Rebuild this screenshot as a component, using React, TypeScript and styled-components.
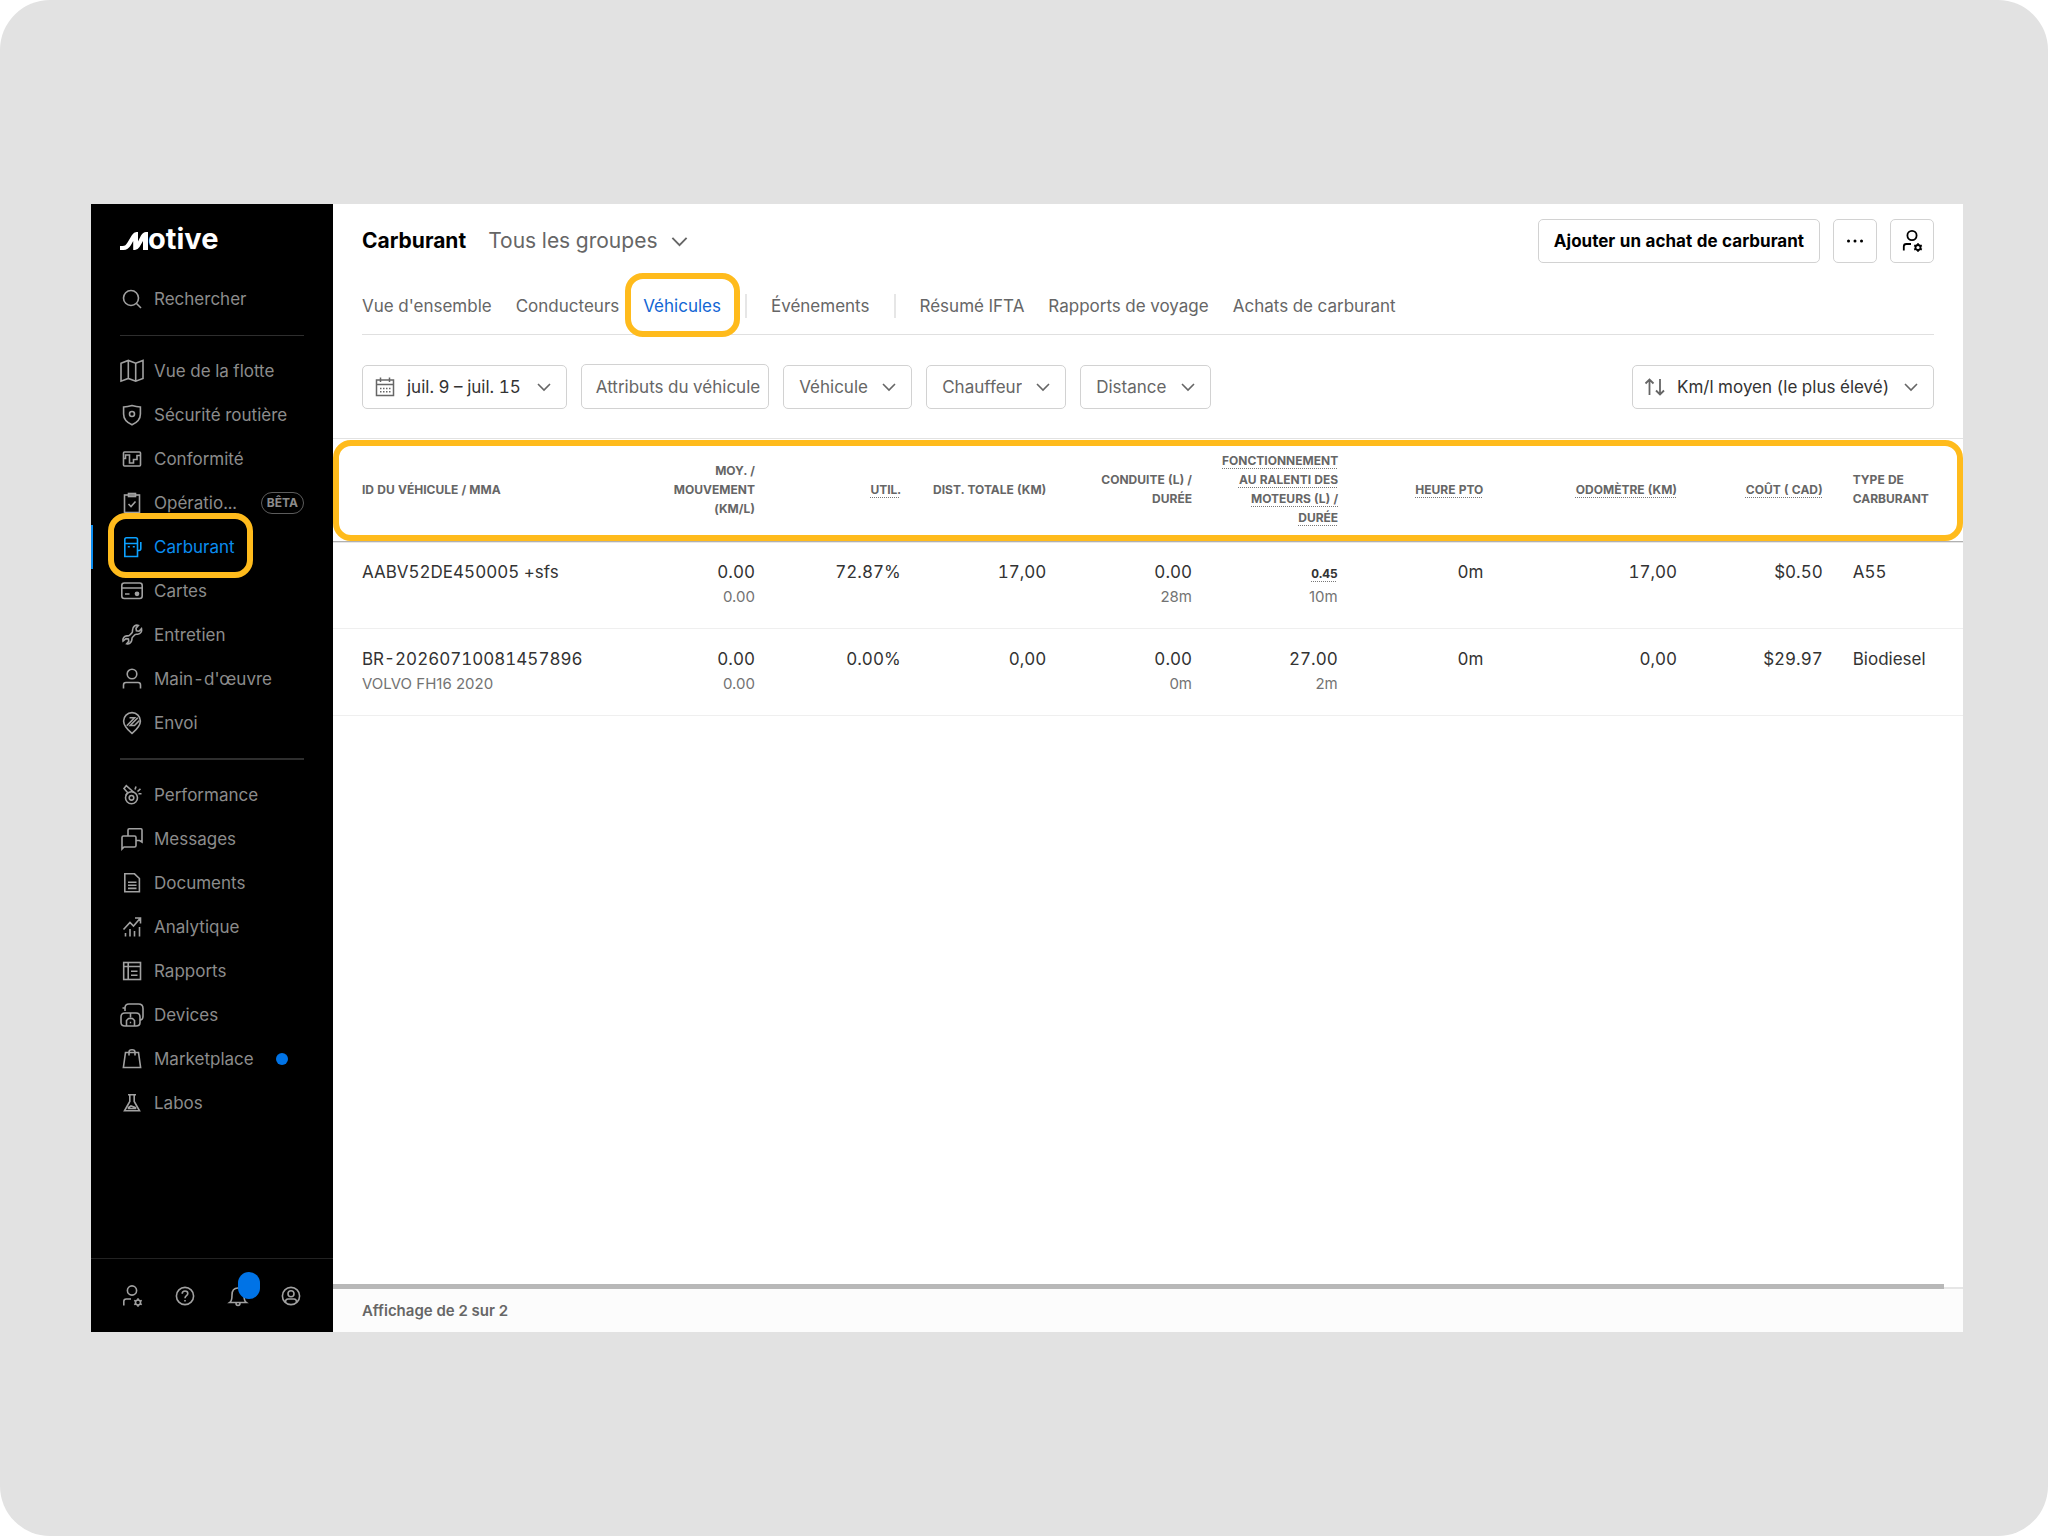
import React from "react";
import styled, { createGlobalStyle, css } from "styled-components";

const FONT = 'Inter, "Liberation Sans", sans-serif';
const GREY = "#666666";
const INK = "#333333";
const HIGHLIGHT = "#ffbb1c";

const GlobalStyle = createGlobalStyle`
  *, *::before, *::after { box-sizing: border-box; }
  html { background: #ffffff; }
  body {
    margin: 0;
    font-family: ${FONT};
    font-size: 17px;
    line-height: 24px;
    font-variant-numeric: tabular-nums;
    color: ${INK};
  }
  button, select { font: inherit; font-variant-numeric: inherit; color: inherit; cursor: pointer; }
  a { color: inherit; text-decoration: none; }
`;

const Backdrop = styled.div`
  min-height: 100vh;
  display: flex;
  padding: 204px 85px 204px 91px;
  background: #e2e2e2;
  border-radius: 50px;
`;

const Window = styled.div`
  flex: 1;
  min-width: 0;
  display: flex;
  background: #ffffff;
`;

const callout = css`
  content: "";
  position: absolute;
  border: 6px solid ${HIGHLIGHT};
  border-radius: 18px;
  pointer-events: none;
`;

/* ---------- Sidebar ---------- */

const Sidebar = styled.aside`
  flex: 0 0 242px;
  display: flex;
  flex-direction: column;
  background: #000000;
  color: #8c8c8c;
`;

const Brand = styled.a`
  display: flex;
  align-items: flex-start;
  height: 34px;
  margin: 17px 29px 22px;
  color: #ffffff;
`;

const BrandText = styled.span`
  font-size: 29px;
  line-height: 36px;
  font-weight: 700;
`;

const NavList = styled.ul`
  list-style: none;
  margin: 0;
  padding: 0;
`;

const NavLink = styled.a<{ $active?: boolean }>`
  position: relative;
  display: flex;
  align-items: center;
  gap: 10px;
  height: 44px;
  padding: 0 29px;
  white-space: nowrap;
  ${(p) =>
    p.$active &&
    css`
      color: #0a8cf0;
      box-shadow: inset 2px 0 0 #0a8cf0;
      &::after {
        ${callout}
        left: 17px;
        top: -12px;
        width: 145px;
        height: 65px;
      }
    `}
`;

const NavIcon = styled.svg`
  flex: none;
  width: 24px;
  height: 24px;
  fill: none;
  stroke: currentColor;
  stroke-width: 1.6;
  filter: brightness(1.15);
`;

const Rule = styled.hr<{ $thick?: boolean }>`
  width: 184px;
  height: ${(p) => (p.$thick ? 2 : 1)}px;
  margin: ${(p) => (p.$thick ? 13 : 14)}px 29px 13px;
  border: 0;
  background: #2e2e2e;
`;

const Beta = styled.span`
  margin-left: auto;
  height: 22px;
  padding: 0 5px;
  border: 1px solid #5c5c5c;
  border-radius: 11px;
  font-size: 12px;
  line-height: 20px;
  font-weight: 700;
`;

const Dot = styled.span`
  width: 12px;
  height: 12px;
  margin-left: 12px;
  border-radius: 50%;
  background: #0073e6;
`;

const SideFooter = styled.div`
  display: flex;
  gap: 29px;
  margin-top: auto;
  padding: 25px 29px 24px;
  border-top: 1px solid #222222;
`;

const SideButton = styled.button`
  position: relative;
  display: flex;
  padding: 0;
  border: 0;
  background: none;
`;

const Notice = styled.span`
  position: absolute;
  left: 12px;
  top: -12px;
  width: 22px;
  height: 27px;
  border-radius: 11px;
  background: #0073e6;
`;

/* ---------- Main column ---------- */

const Main = styled.main`
  flex: 1;
  min-width: 0;
  display: flex;
  flex-direction: column;
`;

const TopBar = styled.header`
  padding: 15px 29px 0;
`;

const TitleRow = styled.div`
  display: flex;
  align-items: center;
  height: 44px;
`;

const Title = styled.h1`
  margin: 0 22px 0 0;
  font-size: 21px;
  line-height: 32px;
  font-weight: 700;
  color: #000000;
`;

const Actions = styled.div`
  display: flex;
  gap: 13px;
  margin-left: auto;
`;

const Button = styled.button<{ $strong?: boolean; $square?: boolean }>`
  display: flex;
  align-items: center;
  justify-content: center;
  height: 44px;
  width: ${(p) => (p.$square ? "44px" : "auto")};
  padding: 0 ${(p) => (p.$square ? 0 : 15)}px;
  border: 1px solid #d2d2d2;
  border-radius: 5px;
  background: #ffffff;
  white-space: nowrap;
  color: ${(p) => (p.$strong ? "#000000" : GREY)};
  font-weight: ${(p) => (p.$strong ? 700 : 400)};
`;

const AttributeButton = styled(Button)`
  height: 45px;
  padding: 0 8px 0 14px;
`;

const DateButton = styled(Button)`
  gap: 12px;
  padding: 0 14px 0 12px;
  color: ${INK};
`;

const Tabs = styled.nav`
  display: flex;
  align-items: center;
  gap: 24px;
  height: 56px;
  margin-top: 16px;
  padding-bottom: 2px;
  border-bottom: 1px solid #e0e0e0;
  color: ${GREY};
`;

const Tab = styled.a<{ $active?: boolean }>`
  position: relative;
  white-space: nowrap;
  ${(p) =>
    p.$active &&
    css`
      color: #1266d4;
      &::after {
        ${callout}
        inset: -21px -19px -19px -18px;
      }
    `}
`;

const TabDivider = styled.span`
  width: 2px;
  height: 24px;
  background: #e6e6e6;
`;

const Filters = styled.div`
  display: flex;
  align-items: flex-end;
  gap: 14px;
  padding: 29px;
`;

const Picker = styled.div<{ $bare?: boolean; $end?: boolean; $dark?: boolean }>`
  display: grid;
  align-items: center;
  margin-left: ${(p) => (p.$end ? "auto" : 0)};
  color: ${(p) => (p.$dark ? INK : GREY)};

  select {
    grid-area: 1 / 1;
    appearance: none;
    height: ${(p) => (p.$bare ? 32 : 44)}px;
    padding: 0 ${(p) => (p.$bare ? 31 : 43)}px 0 ${(p) => (p.$bare ? 0 : p.$end ? 44 : 15)}px;
    border: ${(p) => (p.$bare ? "0" : "1px solid #d2d2d2")};
    border-radius: 5px;
    background: transparent;
    font-size: ${(p) => (p.$bare ? 21 : 17)}px;
  }
  svg {
    grid-area: 1 / 1;
    pointer-events: none;
  }
`;

const Chevron = styled.svg<{ $flush?: boolean; $spaced?: boolean; $large?: boolean }>`
  width: ${(p) => (p.$large ? 19 : 16)}px;
  height: ${(p) => (p.$large ? 19 : 16)}px;
  fill: none;
  stroke: #666666;
  stroke-width: 1.6;
  justify-self: end;
  margin-left: ${(p) => (p.$spaced ? 3 : 0)}px;
  margin-right: ${(p) => (p.$flush ? 0 : 15)}px;
`;

const GlyphSvg = styled.svg`
  width: 24px;
  height: 24px;
  fill: none;
  stroke: currentColor;
  stroke-width: 1.8;
`;

const CalendarSvg = styled(GlyphSvg)`
  width: 20px;
  height: 20px;
  color: #666666;
  stroke-width: 1.5;
`;

const SortSvg = styled(GlyphSvg)`
  margin-left: 11px;
  color: #666666;
`;

/* ---------- Table ---------- */

const TableArea = styled.section`
  position: relative;
  flex: 1;
  border-top: 1px solid #e2e2e2;
`;

const HeaderCallout = styled.span`
  ${callout}
  inset: 1px 0 auto;
  height: 101px;
`;

const Table = styled.table`
  width: 100%;
  table-layout: fixed;
  border-collapse: separate;
  border-spacing: 0;
`;

const Col = styled.col<{ $share: string }>`
  width: ${(p) => p.$share};
`;

const Th = styled.th<{ $left?: boolean; $first?: boolean }>`
  height: 103px;
  padding: 0 15px 2px ${(p) => (p.$first ? 29 : 15)}px;
  border-bottom: 1px solid #b0b0b0;
  box-shadow: 0 1px 0 #e6e6e6;
  vertical-align: middle;
  text-align: ${(p) => (p.$left ? "left" : "right")};
  text-transform: uppercase;
  font-size: 12px;
  line-height: 19px;
  font-weight: 700;
  color: ${GREY};
`;

const ThLabel = styled.span<{ $hint?: boolean; $keep?: boolean }>`
  display: inline-block;
  vertical-align: middle;
  white-space: ${(p) => (p.$keep ? "nowrap" : "normal")};
  text-decoration: ${(p) => (p.$hint ? "underline dotted 1px #777777" : "none")};
  text-underline-offset: 3px;
`;

const Td = styled.td<{ $left?: boolean; $first?: boolean }>`
  height: 87px;
  padding: 18px 15px 19px ${(p) => (p.$first ? 29 : 15)}px;
  border-bottom: 1px solid #efefef;
  vertical-align: top;
  text-align: ${(p) => (p.$left ? "left" : "right")};
  white-space: nowrap;
`;

const Value = styled.div<{ $hint?: boolean }>`
  height: 25px;
  span {
    font-size: ${(p) => (p.$hint ? 12 : 17)}px;
    font-weight: ${(p) => (p.$hint ? 700 : 400)};
    text-decoration: ${(p) => (p.$hint ? "underline dotted 1px #777777" : "none")};
    text-underline-offset: 3px;
  }
`;

const Sub = styled.div`
  font-size: 15px;
  font-variant-numeric: normal;
  color: #737373;
`;

const ScrollTrack = styled.div`
  height: 5px;
  padding-right: 19px;
  background: linear-gradient(#ffffff 3px, #e6e6e6 3px);
`;

const ScrollThumb = styled.div`
  height: 5px;
  background: #b8b8b8;
`;

const Footer = styled.footer`
  display: flex;
  align-items: center;
  height: 43px;
  padding: 0 29px;
  background: #fcfcfc;
  color: ${GREY};
  font-size: 15px;
  font-variant-numeric: normal;
  font-weight: 600;
`;

/* ---------- Icons ---------- */

const SearchIcon = (
  <>
    <circle cx="11" cy="11" r="7.5" />
    <path d="M16.5 16.5 21 21" />
  </>
);

const MapIcon = (
  <path d="M1 4.2 8.3 1.4 15.7 4.2 23 1.4V19.4L15.7 22.2 8.3 19.4 1 22.2ZM8.3 1.4V19.4M15.7 4.2V22.2" />
);

const ShieldIcon = (
  <>
    <path d="M12 2.5C9.5 3.2 6.5 3.8 3.6 4V11c0 5 3.4 8.6 8.4 10.8 5-2.200 8.400-5.800 8.400-10.800V4C17.500 3.800 14.500 3.200 12 2.500Z" />
    <circle cx="12" cy="11" r="2.500" />
  </>
);

const ComplianceIcon = (
  <>
    <rect x="3.500" y="5" width="17" height="14" rx="1" />
    <path d="M3.500 11.500H5.500V8H9.500V16H13.500V12.500H17V8.500H20.500" />
  </>
);

const ClipboardIcon = (
  <>
    <rect x="4.500" y="4" width="15" height="17.500" />
    <rect x="8.500" y="2.500" width="7" height="3" />
    <path d="M8.500 13 11 15.500 15.500 10.500" />
  </>
);

const FuelIcon = (
  <>
    <path d="M4.800 21.500V4.500Q4.800 2.800 6.500 2.800H15.800Q17.500 2.800 17.500 4.500V21.500ZM4.800 8.500H17.500M17.500 15.500H19Q20.800 15.500 20.800 13.500V7" />
    <path d="M7.800 11.800h2M12.800 11.800h2" />
  </>
);

const CardIcon = (
  <>
    <rect x="1.800" y="4" width="20.400" height="15.500" rx="2.500" />
    <path d="M2 9H22M5 15H9.500" />
    <circle cx="17" cy="14.800" r="1.600" fill="currentColor" />
  </>
);

const WrenchIcon = (
  <path d="M14.500 3c1.300-1 2.800-1.100 4-.6l-2.500 2.800.4 2.600 2.600.4 2.500-2.500c.6 2.500-.8 5.300-3.800 5.500-1.500.1-2-.2-2.800.6l-2.400 2.400c-.8.8-.5 1.500-.6 2.500-.3 3-3 4.600-5.200 4l2.100-2.300-.4-2.400-2.400-.4L3 18c-.6-2.400 1.200-5 3.900-5.100 1.300 0 1.900.1 2.700-.7l2.300-2.300c.8-.8.6-1.500.6-2.600C12.500 5.500 13.200 4 14.500 3Z" />
);

const PersonIcon = (
  <>
    <circle cx="12" cy="7" r="4.800" />
    <path d="M3.500 21.500V18a2.500 2.500 0 0 1 2.500-2.500H18a2.500 2.500 0 0 1 2.500 2.500V21.500" />
  </>
);

const DispatchIcon = (
  <>
    <path d="M12 22.500C8.500 19.500 3.600 15.500 3.600 10a8.400 8.400 0 0 1 16.800 0C20.400 15.500 15.500 19.500 12 22.500Z" />
    <path d="M9.500 6.800H14.500L6.800 14.800M17.800 6.800 10.200 14.500H14.500L19.500 9.500" />
  </>
);

const PerformanceIcon = (
  <>
    <circle cx="11.500" cy="14.800" r="6" />
    <circle cx="11.500" cy="14.800" r="2.300" />
    <path d="M5.800 12.500 7.500 9.500 4 5.500 6.300 2.600 14 9.500M15 6.500 16 3.500M17.500 8.500 20.500 5.800M18.500 10.800H21.500" />
  </>
);

const MessagesIcon = (
  <path d="M2 22V10.500Q2 9 3.500 9H14.500Q16 9 16 10.500V18.500Q16 20 14.500 20H4ZM8 9V3Q8 1.800 9.200 1.800H21Q22 1.800 22 3V15L19.500 13.500H16" />
);

const DocumentIcon = (
  <path d="M4.800 2.800H14.500L19.400 7.500V20.800H4.800ZM8 11.200H16.500M8 14.200H16.500M8 17.400H16.500" />
);

const AnalyticsIcon = (
  <path d="M3.500 14.500 10 7.500 13.500 11 20 3.500M15 3H20.500V8.500M5.500 18V21.500M10 14V21.500M14.500 16V21.500M19.500 12V21.500" />
);

const ReportIcon = (
  <>
    <rect x="3.700" y="3.500" width="16.800" height="17" />
    <path d="M3.700 7.500H20.500M8.200 3.500V20.500M11 12.200H17.500M11 16.200H17.500" />
  </>
);

const DevicesIcon = (
  <>
    <path d="M2.500 5H5Q5 1 9 1H18.500Q23 1 23 5.500V13Q23 17 20 17M5 5V8" />
    <path d="M5 10H16Q20 10 20 14V19.500Q20 23 16 23H5Q1 23 1 19.500V14Q1 10 5 10ZM10.500 10V14.500M6.500 23V17.500L8.500 15.500H12.500L14.500 17.500V23" />
    <path d="M9.800 19.500h1.400" />
  </>
);

const BagIcon = (
  <path d="M5.500 5.500H18.500L20.600 20.500H3.400ZM9 8.500V5Q9 2.800 12 2.800T15 5V8.500" />
);

const FlaskIcon = (
  <>
    <path d="M8 3.800H16M9.800 3.800V10.500L4.500 19.800H19.500L14.200 10.500V3.800" />
    <path d="M8.500 16.500 11 15 15.500 16.500V17.500H8.500Z" />
  </>
);

const UserCogIcon = (
  <>
    <circle cx="12" cy="6.500" r="4.600" />
    <path d="M3.800 21.500V17.500Q3.800 15 6.300 15H11" />
    <circle cx="18" cy="18.500" r="2.500" />
    <path d="M18 14.200V16M18 21V22.800M14.200 16.400 15.800 17.300M20.200 19.700 21.800 20.600M14.200 20.600 15.800 19.700M20.200 17.300 21.800 16.400" />
  </>
);

const HelpIcon = (
  <>
    <circle cx="12" cy="12" r="8.600" />
    <path d="M9.200 9.800Q9.200 7 12 7T14.800 9.500C14.800 11.800 12 11.500 12 14.200M12 16V17.600" />
  </>
);

const BellIcon = (
  <path d="M3.800 18.500C6 17 6 15 6 11Q6 4 12 4T18 11C18 15 18 17 20.200 18.500ZM10 19Q10 21.500 12 21.500T14 19" />
);

const AccountIcon = (
  <>
    <circle cx="12" cy="12" r="8.600" />
    <circle cx="12" cy="9.800" r="3" />
    <path d="M6.500 18Q6.500 15 9 15H15Q17.500 15 17.500 18" />
  </>
);

const Icon = ({ children }: { children: React.ReactNode }) => (
  <NavIcon viewBox="0 0 24 24" aria-hidden="true">
    {children}
  </NavIcon>
);

const Down = ({ flush, spaced, large }: { flush?: boolean; spaced?: boolean; large?: boolean }) => (
  <Chevron viewBox="0 0 16 16" $flush={flush} $spaced={spaced} $large={large} aria-hidden="true">
    <path d="M2 5 8 11 14 5" />
  </Chevron>
);

/* ---------- Data ---------- */

type NavEntry = { label: string; icon: React.ReactNode; active?: boolean; beta?: boolean; dot?: boolean };

const primaryNav: NavEntry[] = [
  { label: "Vue de la flotte", icon: MapIcon },
  { label: "Sécurité routière", icon: ShieldIcon },
  { label: "Conformité", icon: ComplianceIcon },
  { label: "Opératio...", icon: ClipboardIcon, beta: true },
  { label: "Carburant", icon: FuelIcon, active: true },
  { label: "Cartes", icon: CardIcon },
  { label: "Entretien", icon: WrenchIcon },
  { label: "Main-d'œuvre", icon: PersonIcon },
  { label: "Envoi", icon: DispatchIcon },
];

const secondaryNav: NavEntry[] = [
  { label: "Performance", icon: PerformanceIcon },
  { label: "Messages", icon: MessagesIcon },
  { label: "Documents", icon: DocumentIcon },
  { label: "Analytique", icon: AnalyticsIcon },
  { label: "Rapports", icon: ReportIcon },
  { label: "Devices", icon: DevicesIcon },
  { label: "Marketplace", icon: BagIcon, dot: true },
  { label: "Labos", icon: FlaskIcon },
];

const tabs = [
  "Vue d'ensemble",
  "Conducteurs",
  "Véhicules",
  null,
  "Événements",
  null,
  "Résumé IFTA",
  "Rapports de voyage",
  "Achats de carburant",
];

const filters = ["Véhicule", "Chauffeur", "Distance"];

const columns = [
  { label: "ID du véhicule / MMA", share: "17.85%", left: true },
  { label: "Moy. / mouvement (km/l)", share: "8.93%" },
  { label: "Util.", share: "8.93%", hint: true },
  { label: "Dist. totale (km)", share: "8.93%", keep: true },
  { label: "Conduite (l) / durée", share: "8.93%" },
  { label: "Fonctionnement au ralenti des moteurs (l) / durée", share: "8.93%", hint: true },
  { label: "Heure PTO", share: "8.93%", hint: true },
  { label: "Odomètre (km)", share: "11.87%", hint: true },
  { label: "Coût ( CAD)", share: "8.93%", hint: true },
  { label: "Type de carburant", share: "7.67%", left: true },
];

type Cell = { value: string; sub?: string; hint?: boolean };

const rows: Cell[][] = [
  [
    { value: "AABV52DE450005 +sfs" },
    { value: "0.00", sub: "0.00" },
    { value: "72.87%" },
    { value: "17,00" },
    { value: "0.00", sub: "28m" },
    { value: "0.45", sub: "10m", hint: true },
    { value: "0m" },
    { value: "17,00" },
    { value: "$0.50" },
    { value: "A55" },
  ],
  [
    { value: "BR-20260710081457896", sub: "VOLVO FH16 2020" },
    { value: "0.00", sub: "0.00" },
    { value: "0.00%" },
    { value: "0,00" },
    { value: "0.00", sub: "0m" },
    { value: "27.00", sub: "2m" },
    { value: "0m" },
    { value: "0,00" },
    { value: "$29.97" },
    { value: "Biodiesel" },
  ],
];

const NavGroup = ({ entries }: { entries: NavEntry[] }) => (
  <NavList>
    {entries.map((e) => (
      <li key={e.label}>
        <NavLink href="#" $active={e.active} aria-current={e.active ? "page" : undefined}>
          <Icon>{e.icon}</Icon>
          {e.label}
          {e.beta && <Beta>BÊTA</Beta>}
          {e.dot && <Dot />}
        </NavLink>
      </li>
    ))}
  </NavList>
);

export default function App() {
  return (
    <>
      <GlobalStyle />
      <Backdrop>
        <Window>
          <Sidebar>
            <Brand href="#" aria-label="Motive">
              <svg width="28" height="34" viewBox="0 0 28 34" fill="currentColor" aria-hidden="true">
                <path d="M0 25H2.500C5 25 6 24 7.500 21.500L12 14Q14 11 16.500 11H18V20.500L21 14.500Q23 11 26 11H28V29H23V20L19.500 26Q17.500 29 15 29H13.200V20L11 24Q8 29 3.500 29H0Z" />
              </svg>
              <BrandText>otive</BrandText>
            </Brand>
            <NavLink href="#">
              <Icon>{SearchIcon}</Icon>
              Rechercher
            </NavLink>
            <Rule />
            <NavGroup entries={primaryNav} />
            <Rule $thick />
            <NavGroup entries={secondaryNav} />
            <SideFooter>
              <SideButton aria-label="Administration">
                <Icon>{UserCogIcon}</Icon>
              </SideButton>
              <SideButton aria-label="Aide">
                <Icon>{HelpIcon}</Icon>
              </SideButton>
              <SideButton aria-label="Notifications">
                <Icon>{BellIcon}</Icon>
                <Notice />
              </SideButton>
              <SideButton aria-label="Compte">
                <Icon>{AccountIcon}</Icon>
              </SideButton>
            </SideFooter>
          </Sidebar>

          <Main>
            <TopBar>
              <TitleRow>
                <Title>Carburant</Title>
                <Picker $bare>
                  <select aria-label="Groupe">
                    <option>Tous les groupes</option>
                  </select>
                  <Down flush large />
                </Picker>
                <Actions>
                  <Button $strong>Ajouter un achat de carburant</Button>
                  <Button $strong $square aria-label="Plus d'actions">
                    <GlyphSvg viewBox="0 0 24 24" aria-hidden="true">
                      <path d="M5.500 12h.01M12 12h.01M18.500 12h.01" strokeWidth="3" strokeLinecap="round" />
                    </GlyphSvg>
                  </Button>
                  <Button $strong $square aria-label="Administration">
                    <GlyphSvg viewBox="0 0 24 24" aria-hidden="true">
                      {UserCogIcon}
                    </GlyphSvg>
                  </Button>
                </Actions>
              </TitleRow>
              <Tabs>
                {tabs.map((t, i) =>
                  t === null ? (
                    <TabDivider key={i} />
                  ) : (
                    <Tab key={t} href="#" $active={t === "Véhicules"}>
                      {t}
                    </Tab>
                  )
                )}
              </Tabs>
            </TopBar>

            <Filters>
              <DateButton>
                <CalendarSvg viewBox="0 0 20 20" aria-hidden="true">
                  <path d="M1.500 3H18.500V18.500H1.500ZM1.500 7.500H18.500M5.500 0.500V5M14.500 0.500V5" />
                  <path d="M5 11.500H15.500M5 14.800H15.500" strokeDasharray="1.500 1.500" />
                </CalendarSvg>
                juil. 9 – juil. 15
                <Down flush spaced />
              </DateButton>
              <AttributeButton>Attributs du véhicule</AttributeButton>
              {filters.map((f) => (
                <Picker key={f}>
                  <select aria-label={f}>
                    <option>{f}</option>
                  </select>
                  <Down />
                </Picker>
              ))}
              <Picker $end $dark>
                <select aria-label="Trier par">
                  <option>Km/l moyen (le plus élevé)</option>
                </select>
                <SortSvg viewBox="0 0 24 24" aria-hidden="true">
                  <path d="M6.500 20V4.500M2.500 8.500 6.500 4.500 10.500 8.500M17 4V19.500M13 15.500 17 19.500 21 15.500" />
                </SortSvg>
                <Down />
              </Picker>
            </Filters>

            <TableArea>
              <Table>
                <colgroup>
                  {columns.map((c) => (
                    <Col key={c.label} $share={c.share} />
                  ))}
                </colgroup>
                <thead>
                  <tr>
                    {columns.map((c, i) => (
                      <Th key={c.label} scope="col" $left={c.left} $first={i === 0}>
                        <ThLabel $hint={c.hint} $keep={c.keep}>
                          {c.label}
                        </ThLabel>
                      </Th>
                    ))}
                  </tr>
                </thead>
                <tbody>
                  {rows.map((r) => (
                    <tr key={r[0].value}>
                      {r.map((cell, i) => (
                        <Td key={i} $left={columns[i].left} $first={i === 0}>
                          <Value $hint={cell.hint}>
                            <span>{cell.value}</span>
                          </Value>
                          {cell.sub && <Sub>{cell.sub}</Sub>}
                        </Td>
                      ))}
                    </tr>
                  ))}
                </tbody>
              </Table>
              <HeaderCallout />
            </TableArea>
            <ScrollTrack>
              <ScrollThumb />
            </ScrollTrack>
            <Footer>Affichage de 2 sur 2</Footer>
          </Main>
        </Window>
      </Backdrop>
    </>
  );
}
